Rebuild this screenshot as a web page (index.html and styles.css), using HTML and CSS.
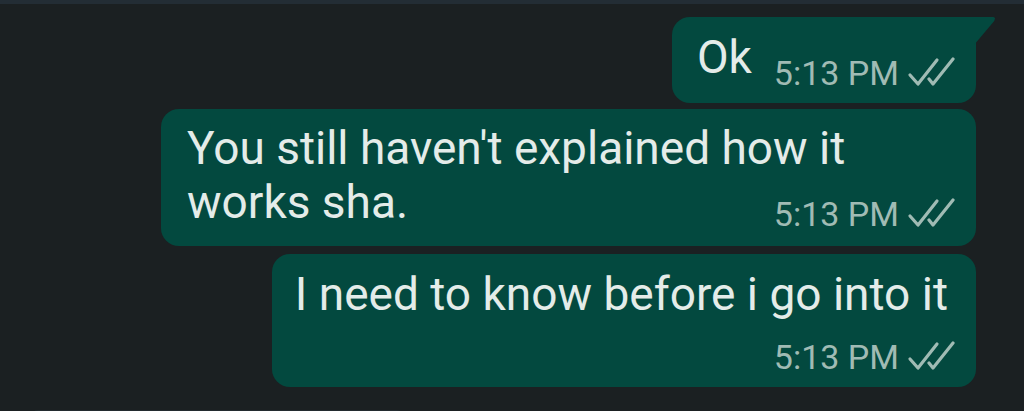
FILE: index.html
```html
<!DOCTYPE html>
<html>
<head>
<meta charset="utf-8">
<link rel="stylesheet" href="styles.css">
</head>
<body>
<div class="topbar"></div>
<div class="chat">
  <div class="bubble bubble-row tail">
    <span class="text">Ok</span>
    <span class="meta">5:13 PM
      <svg class="ticks" viewBox="0 0 52 30" width="52" height="30"><path d="M5 18 L13 27 L32 3"/><path d="M24 22 L28 27 L48 2"/></svg>
    </span>
  </div>
  <div class="bubble bubble-flow">
    <span class="text">You still haven't explained how it works sha.</span><span class="meta">5:13 PM
      <svg class="ticks" viewBox="0 0 52 30" width="52" height="30"><path d="M5 18 L13 27 L32 3"/><path d="M24 22 L28 27 L48 2"/></svg>
    </span>
  </div>
  <div class="bubble bubble-last">
    <span class="text">I need to know before i go into it</span>
    <span class="meta">5:13 PM
      <svg class="ticks" viewBox="0 0 52 30" width="52" height="30"><path d="M5 18 L13 27 L32 3"/><path d="M24 22 L28 27 L48 2"/></svg>
    </span>
  </div>
</div>
<div class="bottombar"></div>
</body>
</html>
```
FILE: styles.css
```css
html, body {
  margin: 0;
  padding: 0;
  height: 411px;
  overflow: hidden;
  background: #1b2022;
  font-family: Roboto, "Noto Sans", sans-serif;
}
.topbar {
  height: 4px;
  background: #232d35;
}
.chat {
  display: flex;
  flex-direction: column;
  align-items: flex-end;
  gap: 6px;
  padding: 13px 48px 0 0;
}
.bubble {
  position: relative;
  box-sizing: border-box;
  max-width: 815px;
  background: #03493f;
  border-radius: 18px;
  padding: 13px 26px 9px 27px;
  display: flex;
  flex-direction: column;
  color: #e4ece9;
}
.text {
  font-size: 46px;
  line-height: 54px;
}
.meta {
  align-self: flex-end;
  display: flex;
  align-items: center;
  gap: 6px;
  font-size: 34px;
  line-height: 40px;
  color: #a0bbb4;
  margin-top: 16px;
  margin-right: -7px;
}
.ticks {
  fill: none;
  stroke: #a0bbb4;
  stroke-width: 3.2;
  stroke-linecap: round;
  stroke-linejoin: round;
  margin-top: -2px;
}
.bubble-row {
  flex-direction: row;
  align-items: flex-start;
  padding: 13px 28px 10px 25px;
  gap: 22px;
}
.bubble-row .meta {
  margin-top: 23px;
  margin-right: -9px;
}
.bubble-flow {
  display: flow-root;
  padding: 12px 28px 12px 26px;
}
.bubble-flow .meta {
  float: right;
  margin-top: 19px;
  margin-left: 20px;
  margin-right: -9px;
}
.bubble-last {
  margin-top: 2px;
  padding: 13px 28px 10px 23px;
}
.bubble-last .meta {
  margin-right: -9px;
}
.tail {
  border-top-right-radius: 0;
}
.tail::after {
  content: "";
  position: absolute;
  top: 0;
  right: -20px;
  width: 22px;
  height: 28px;
  background: #03493f;
  clip-path: polygon(0 0, 88% 0, 96% 4%, 92% 14%, 0 100%);
}
.bottombar {
  margin: 23px 0 0 30px;
  width: 375px;
  height: 12px;
  border-radius: 8px 8px 0 0;
  background: #232b2f;
}
```
